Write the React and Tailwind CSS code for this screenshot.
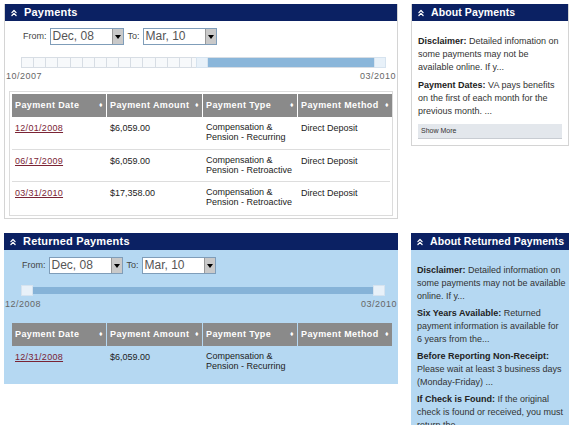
import { ChevronsUp } from 'lucide-react';

const PAYMENTS = [
  { date: '12/01/2008', amount: '$6,059.00', type: ['Compensation &', 'Pension - Recurring'], method: 'Direct Deposit' },
  { date: '06/17/2009', amount: '$6,059.00', type: ['Compensation &', 'Pension - Retroactive'], method: 'Direct Deposit' },
  { date: '03/31/2010', amount: '$17,358.00', type: ['Compensation &', 'Pension - Retroactive'], method: 'Direct Deposit' },
];

const RETURNED = [
  { date: '12/31/2008', amount: '$6,059.00', type: ['Compensation &', 'Pension - Recurring'], method: '' },
];

const COLUMNS = ['Payment Date', 'Payment Amount', 'Payment Type', 'Payment Method'];

function PanelHeader({ title, small }) {
  return (
    <div className="h-[17px] bg-[#0b2163] flex items-center pl-[4px] gap-[5px] text-white whitespace-nowrap">
      <ChevronsUp size={10} strokeWidth={3} className="shrink-0" />
      <span className={`font-bold leading-none ${small ? 'text-[10.5px] tracking-[0.1px]' : 'text-[11px] tracking-[0.2px]'}`}>
        {title}
      </span>
    </div>
  );
}

function SelectBox({ value }) {
  return (
    <div className="w-[74px] h-[17px] border border-[#7f9db9] bg-white flex items-stretch">
      <span className="flex-1 pl-[2px] text-[12px] leading-[15px] text-[#555]">{value}</span>
      <span className="w-[11px] bg-[#c9c9c9] border-l border-[#999] flex items-center justify-center">
        <span className="w-0 h-0 border-l-[3px] border-r-[3px] border-t-[4px] border-l-transparent border-r-transparent border-t-black" />
      </span>
    </div>
  );
}

function DateRange() {
  return (
    <div className="flex items-center pl-[18px] gap-[3px] text-[9px] text-[#444]">
      <span>From:</span>
      <SelectBox value="Dec, 08" />
      <span className="ml-[1px]">To:</span>
      <SelectBox value="Mar, 10" />
    </div>
  );
}

function Slider({ full, left, right }) {
  const cells = Array.from({ length: 30 });
  return (
    <div>
      <div className="relative ml-[17px] w-[364px] h-[11px]">
        {full ? (
          <div className="absolute left-0 right-0 top-[2px] h-[7px] bg-[#86b3d8]" />
        ) : (
          <>
            <div className="absolute inset-0 flex">
              {cells.map((_, i) => (
                <div key={i} className="flex-1 border border-[#d7dde4] -ml-px bg-[#f7f9fb]" />
              ))}
            </div>
            <div className="absolute left-[178px] right-[12px] top-[1px] h-[9px] bg-[#8ab6da]" />
          </>
        )}
        <div
          className="absolute top-0 w-[12px] h-[11px] bg-[#e8f1f9] border border-[#d6e3ef]"
          style={{ left: left }}
        />
        <div
          className="absolute top-0 w-[12px] h-[11px] bg-[#e8f1f9] border border-[#d6e3ef]"
          style={{ left: right }}
        />
      </div>
      <div className="flex justify-between px-[1px] mt-[3px] text-[9px] leading-[10px] text-[#666] tracking-[0.5px]">
        <span>{full ? '12/2008' : '10/2007'}</span>
        <span>03/2010</span>
      </div>
    </div>
  );
}

function Table({ rows }) {
  return (
    <div className="text-[9px] text-[#222]">
      <div className="grid grid-cols-[94px_95px_94px_94px] gap-x-[1px] h-[23px]">
        {COLUMNS.map((c) => (
          <div key={c} className="bg-[#8a8a8a] text-white font-bold flex items-center justify-between px-[3px] tracking-[0.4px]">
            <span>{c}</span>
            <span className="text-[7px]">&#x2666;</span>
          </div>
        ))}
      </div>
      {rows.map((r, i) => (
        <div key={r.date} className={`grid grid-cols-[94px_95px_94px_94px] gap-x-[1px] h-[32px] ${i > 0 ? 'border-t border-[#ddd]' : ''}`}>
          <div className="px-[3px] pt-[5px]">
            <a href="#" className="text-[#7a2435] underline tracking-[0.3px]">{r.date}</a>
          </div>
          <div className="px-[3px] pt-[5px]">{r.amount}</div>
          <div className="px-[3px] pt-[5px] leading-[10px]">
            {r.type[0]}
            <br />
            {r.type[1]}
          </div>
          <div className="px-[3px] pt-[5px]">{r.method}</div>
        </div>
      ))}
    </div>
  );
}

function Note({ label, children }) {
  return (
    <p className="text-[9px] leading-[13px] text-[#333]">
      <b className="text-[#222]">{label}</b> {children}
    </p>
  );
}

export default function App() {
  return (
    <div
      className="w-[576px] h-[425px] bg-white overflow-hidden pl-[4px] pt-[4px] flex flex-col gap-[14px]"
      style={{ fontFamily: '"Liberation Sans", Arial, sans-serif' }}
    >
      <div className="flex items-start gap-[13px]">
        <section className="w-[394px] h-[215px] border border-[#d4d4d4] border-t-0">
          <PanelHeader title="Payments" />
          <div className="pt-[7px]">
            <DateRange />
            <div className="mt-[12px]">
              <Slider left={174} right={352} />
            </div>
            <div className="mx-[4px] mt-[10px] border border-[#dcdcdc] p-[2px]">
              <Table rows={PAYMENTS} />
            </div>
          </div>
        </section>
        <section className="w-[158px] h-[142px] border border-[#d4d4d4] border-t-0">
          <PanelHeader title="About Payments" small />
          <div className="pl-[6px] pr-[3px] pt-[14px] flex flex-col gap-[5px]">
            <Note label="Disclaimer:">Detailed infomation on some payments may not be available online. If y...</Note>
            <Note label="Payment Dates:">VA pays benefits on the first of each month for the previous month. ...</Note>
            <div className="mt-[1px] mr-[3px] h-[15px] bg-[#e3e7ec] border-b border-[#c8ccd2] text-[7px] text-[#333] pl-[3px] flex items-center">
              Show More
            </div>
          </div>
        </section>
      </div>

      <div className="flex items-start gap-[13px]">
        <section className="w-[394px] h-[151px] bg-[#b5d8f2]">
          <PanelHeader title="Returned Payments" />
          <div className="pt-[7px]">
            <DateRange />
            <div className="mt-[11px]">
              <Slider full left={0} right={352} />
            </div>
            <div className="mx-[8px] mt-[14px]">
              <Table rows={RETURNED} />
            </div>
          </div>
        </section>
        <section className="w-[158px] h-[200px] bg-[#b5d8f2]">
          <PanelHeader title="About Returned Payments" small />
          <div className="pl-[6px] pr-[3px] pt-[14px] flex flex-col gap-[4px]">
            <Note label="Disclaimer:">Detailed information on some payments may not be available online. If y...</Note>
            <Note label="Six Years Available:">Returned payment information is available for 6 years from the...</Note>
            <Note label="Before Reporting Non-Receipt:">Please wait at least 3 business days (Monday-Friday) ...</Note>
            <Note label="If Check is Found:">If the original check is found or received, you must return the...</Note>
          </div>
        </section>
      </div>
    </div>
  );
}
